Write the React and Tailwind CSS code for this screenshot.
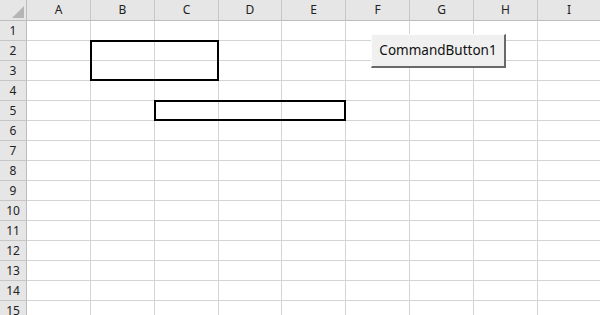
import React from "react";

const cols = ["A", "B", "C", "D", "E", "F", "G", "H", "I"];
const widths = ["w-[64px]", "w-[64px]", "w-[64px]", "w-[63px]", "w-[64px]", "w-[64px]", "w-[64px]", "w-[64px]", "w-[63px]"];
const rows = Array.from({length: 15}, (_, i) => i + 1);

export default function App() {
    return (
        <div className="relative w-[600px] h-[315px] overflow-hidden bg-white" style={{fontFamily: '"Noto Sans", "Open Sans", sans-serif'}}>
            {/* header */}
            <div className="flex h-[21px]">
                <div className="relative w-[27px] shrink-0 bg-[#e6e6e6] border-r border-b border-[#bdbdbd]">
                    <div className="absolute right-[2px] bottom-[2px] w-0 h-0 border-l-[12px] border-l-transparent border-b-[12px] border-b-[#b5b5b5]"/>
                </div>
                {cols.map((c, i) => (
                    <div
                        key={c}
                        className={`${widths[i]} shrink-0 bg-[#e6e6e6] border-r border-b border-[#c6c6c6] border-b-[#bdbdbd] flex items-center justify-center text-[12px] text-[#222]`}
                    >
                        {c}
                    </div>
                ))}
            </div>
            {rows.map((r) => (
                <div key={r} className="flex h-[20px]">
                    <div className="w-[27px] shrink-0 bg-[#e6e6e6] border-r border-b border-[#c6c6c6] border-r-[#bdbdbd] flex items-center justify-center text-[12px] text-[#222]">
                        {r}
                    </div>
                    {cols.map((c, i) => (
                        <div key={c} className={`${widths[i]} shrink-0 border-r border-b border-[#d4d4d4]`}/>
                    ))}
                </div>
            ))}

            {/* shapes on sheet */}
            <div className="absolute left-[90px] top-[40px] w-[129px] h-[41px] border-2 border-black"/>
            <div className="absolute left-[154px] top-[100px] w-[192px] h-[21px] border-2 border-black"/>

            <div className="absolute left-[371px] top-[34px] w-[135px] h-[34px] bg-[#f0f0f0] border-t border-l border-t-[#fcfcfc] border-l-[#fcfcfc] border-r-2 border-b-2 border-r-[#696969] border-b-[#696969] flex items-center justify-center text-[13.5px] text-[#111]">
                CommandButton1
            </div>
        </div>
    );
}
